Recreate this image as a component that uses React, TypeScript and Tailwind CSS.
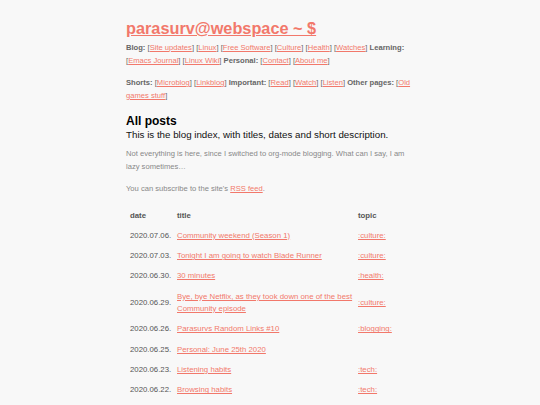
import React from 'react';

const link = 'text-[#f2786b] underline';

const POSTS = [
    { date: '2020.07.06.', title: 'Community weekend (Season 1)', topic: ':culture:' },
    { date: '2020.07.03.', title: 'Tonight I am going to watch Blade Runner', topic: ':culture:' },
    { date: '2020.06.30.', title: '30 minutes', topic: ':health:' },
    { date: '2020.06.29.', title: 'Bye, bye Netflix, as they took down one of the best Community episode', topic: ':culture:' },
    { date: '2020.06.26.', title: 'Parasurvs Random Links #10', topic: ':blogging:' },
    { date: '2020.06.25.', title: 'Personal: June 25th 2020', topic: '' },
    { date: '2020.06.23.', title: 'Listening habits', topic: ':tech:' },
    { date: '2020.06.22.', title: 'Browsing habits', topic: ':tech:' },
];

function L({ children }: { children: React.ReactNode }) {
    return (
        <>
            [<a href="#" className={link}>{children}</a>]
        </>
    );
}

export default function App() {
    return (
        <div className="min-h-[405px] bg-[#f8f8f8] font-['Liberation_Sans',Arial,sans-serif]">
            <div className="mx-auto w-[290px] translate-x-[1px] pt-[17px] text-[7.6px] leading-[12.5px] text-[#666]">
                <h1 className="text-[16.3px] font-bold leading-[22px]">
                    <a href="#" className={link}>parasurv@webspace ~ $</a>
                </h1>
                <p className="mt-[3px]">
                    <b>Blog:</b> <L>Site updates</L> <L>Linux</L> <L>Free Software</L> <L>Culture</L>{' '}
                    <L>Health</L> <L>Watches</L> <b>Learning:</b> <L>Emacs Journal</L> <L>Linux Wiki</L>{' '}
                    <b>Personal:</b> <L>Contact</L> <L>About me</L>
                </p>
                <p className="mt-[10px]">
                    <b>Shorts:</b> <L>Microblog</L> <L>Linkblog</L> <b>Important:</b> <L>Read</L> <L>Watch</L>{' '}
                    <L>Listen</L> <b>Other pages:</b> <L>Old games stuff</L>
                </p>
                <h2 className="mt-[12px] text-[12px] font-bold leading-[14px] text-black">All posts</h2>
                <p className="text-[9.75px] leading-[13px] text-[#111]">
                    This is the blog index, with titles, dates and short description.
                </p>
                <p className="mt-[7px] text-[#888]">
                    Not everything is here, since I switched to org-mode blogging. What can I say, I am lazy
                    sometimes…
                </p>
                <p className="mt-[10px] text-[#888]">
                    You can subscribe to the site's <a href="#" className={link}>RSS feed</a>.
                </p>
                <table className="mt-[10px] w-full border-collapse text-[7.8px] leading-[12px]">
                    <thead>
                        <tr className="text-left text-[#555]">
                            <th className="w-[51px] py-[4px] pl-[4px] font-bold">date</th>
                            <th className="py-[4px] font-bold">title</th>
                            <th className="w-[58px] py-[4px] font-bold">topic</th>
                        </tr>
                    </thead>
                    <tbody>
                        {POSTS.map((p) => (
                            <tr key={p.date} className="text-[#555]">
                                <td className="py-[4.2px] pl-[4px] align-middle">{p.date}</td>
                                <td className="py-[4.2px] pr-[2px]">
                                    <a href="#" className={link}>{p.title}</a>
                                </td>
                                <td className="py-[4.2px]">
                                    {p.topic && <a href="#" className={link}>{p.topic}</a>}
                                </td>
                            </tr>
                        ))}
                    </tbody>
                </table>
            </div>
        </div>
    );
}
